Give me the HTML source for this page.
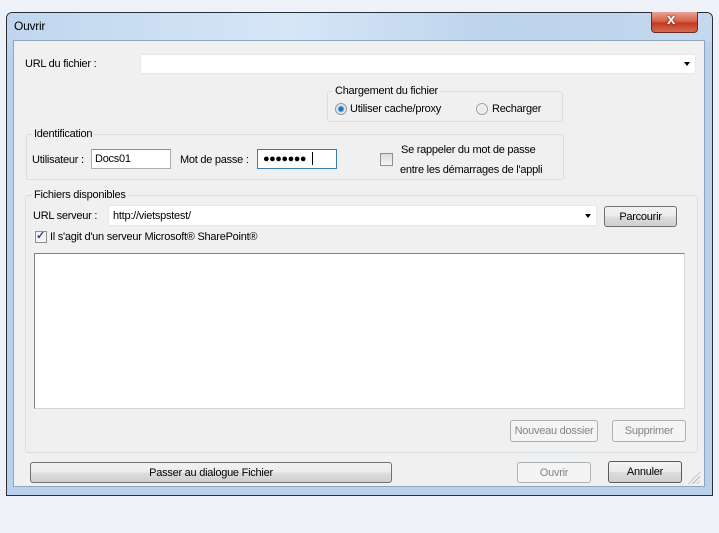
<!DOCTYPE html>
<html><head><meta charset="utf-8"><style>
body{margin:0;width:719px;height:533px;background:#eef2f8;position:relative;overflow:hidden;font-family:"Liberation Sans",sans-serif;font-size:11px;color:#000}
div,span{position:absolute;box-sizing:border-box}
.t{white-space:nowrap;line-height:13px;letter-spacing:-0.25px}
.grp{border:1px solid #d5dfe5;border-radius:3px}
.lbl{background:#f0f0f0;padding:0 2px}
.in{background:#fff;border:1px solid #abadb3;border-top-color:#8e8f8f}
.btn{border:1px solid #707070;border-radius:3px;background:linear-gradient(#f2f2f2 0,#ebebeb 50%,#dddddd 51%,#cfcfcf 100%);text-align:center;line-height:20px;letter-spacing:-0.25px}
.dis{border:1px solid #adb2b5;border-radius:3px;background:#f4f4f4;color:#838383;text-align:center;line-height:20px;letter-spacing:-0.25px}
.arr{width:0;height:0;border-left:3.5px solid transparent;border-right:3.5px solid transparent;border-top:4px solid #000}
</style></head><body>
<div style="left:6px;top:12px;width:707px;height:484px;border:1px solid #2a2f36;border-radius:6px 6px 0 0;background:linear-gradient(#c4daf1,#b9d1ea 40px,#b9d1ea);"></div>
<div style="left:7px;top:13px;width:705px;height:28px;background:linear-gradient(90deg,#c0d6ee,#d6e6f7 40%,#bcd3ec 70%,#c4d9ef);border-radius:5px 5px 0 0"></div>
<span class="t" style="left:14px;top:20px;font-size:12px">Ouvrir</span>
<div style="left:651px;top:12px;width:47px;height:21px;border:1px solid #6b2a22;border-top:none;border-radius:0 0 4px 4px;background:linear-gradient(#e8a393,#d7624d 45%,#c43a22 55%,#d36a4f)"></div>
<span class="t" style="left:667px;top:11px;color:#fff;font-weight:bold;font-size:15px;line-height:18px;text-shadow:0 0 2px #5a1a10">x</span>
<div style="left:13px;top:40px;width:692px;height:447px;background:#f0f0f0;border:1px solid #8fa5bd"></div>

<span class="t" style="left:25px;top:58px">URL du fichier :</span>
<div class="in" style="left:140px;top:54px;width:556px;height:20px;border-color:#e3e9ef"></div>
<div class="arr" style="left:684px;top:62px"></div>

<div class="grp" style="left:327px;top:91px;width:236px;height:31px"></div>
<span class="t lbl" style="left:333px;top:85px">Chargement du fichier</span>
<div style="left:335px;top:103px;width:12px;height:12px;border-radius:50%;border:1px solid #8a9aa8;background:radial-gradient(circle,#1d5a8a 0,#3f8fc7 2.5px,#dfe7ee 3.5px,#f4f6f8 100%)"></div>
<span class="t" style="left:350px;top:103px">Utiliser cache/proxy</span>
<div style="left:476px;top:103px;width:12px;height:12px;border-radius:50%;border:1px solid #9aa4ad;background:radial-gradient(circle,#e4e6e8,#fafafa)"></div>
<span class="t" style="left:492px;top:103px">Recharger</span>

<div class="grp" style="left:26px;top:134px;width:538px;height:46px"></div>
<span class="t lbl" style="left:32px;top:128px">Identification</span>
<span class="t" style="left:32px;top:154px">Utilisateur :</span>
<div class="in" style="left:91px;top:149px;width:80px;height:20px"></div>
<span class="t" style="left:95px;top:153px">Docs01</span>
<span class="t" style="left:180px;top:154px">Mot de passe :</span>
<div class="in" style="left:257px;top:149px;width:80px;height:20px;border-color:#3d7bad"></div>
<span class="t" style="left:263px;top:153px;font-size:11px;letter-spacing:-0.5px">●●●●●●●</span>
<div style="left:312px;top:152px;width:1px;height:13px;background:#000"></div>
<div style="left:380px;top:153px;width:13px;height:13px;border:1px solid #8f8f8f;background:linear-gradient(#dcdcdc,#f6f6f6)"></div>
<span class="t" style="left:401px;top:144px">Se rappeler du mot de passe</span>
<span class="t" style="left:400px;top:164px">entre les démarrages de l'appli</span>

<div class="grp" style="left:25px;top:195px;width:673px;height:258px"></div>
<span class="t lbl" style="left:32px;top:189px">Fichiers disponibles</span>
<span class="t" style="left:33px;top:210px">URL serveur :</span>
<div class="in" style="left:108px;top:205px;width:489px;height:21px;border-color:#e3e9ef"></div>
<span class="t" style="left:113px;top:210px">http://vietspstest/</span>
<div class="arr" style="left:585px;top:214px"></div>
<div class="btn" style="left:604px;top:206px;width:73px;height:21px">Parcourir</div>
<div style="left:35px;top:231px;width:12px;height:12px;border:1px solid #8f8f8f;background:#f4f4f4"></div>
<span class="t" style="left:36px;top:230px;color:#2a4a7a;font-weight:bold;font-size:11px">✓</span>
<span class="t" style="left:50px;top:231px">Il s'agit d'un serveur Microsoft® SharePoint®</span>
<div style="left:34px;top:253px;width:651px;height:156px;background:#fff;border:1px solid #d6d6d6;border-left-color:#828282;border-top-color:#828282"></div>
<div class="dis" style="left:510px;top:420px;width:88px;height:22px;line-height:21px">Nouveau dossier</div>
<div class="dis" style="left:612px;top:420px;width:74px;height:22px;line-height:21px">Supprimer</div>

<div class="btn" style="left:30px;top:462px;width:362px;height:21px">Passer au dialogue Fichier</div>
<div class="dis" style="left:517px;top:462px;width:74px;height:21px">Ouvrir</div>
<div class="btn" style="left:608px;top:461px;width:74px;height:22px;border-color:#5a5a5a">Annuler</div>
<div style="left:686px;top:470px;width:14px;height:14px;background:repeating-linear-gradient(135deg,transparent 0 2px,#b0b8c2 2px 3px);clip-path:polygon(100% 0,100% 100%,0 100%)"></div>
</body></html>
